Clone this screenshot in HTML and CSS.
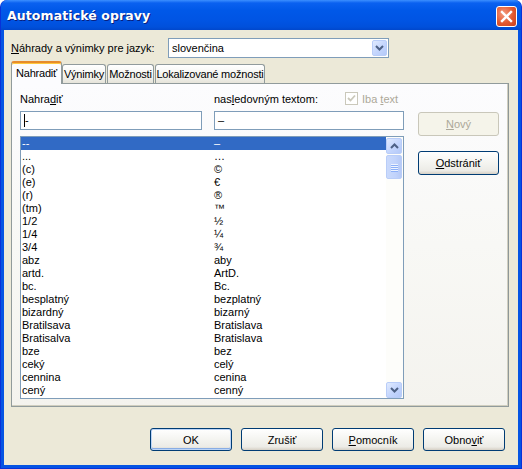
FILE: index.html
```html
<!DOCTYPE html>
<html lang="sk">
<head>
    <meta charset="UTF-8">
    <title>Automatické opravy</title>
    <link rel="stylesheet" href="styles.css">
</head>
<body>
    <div class="window">
        <div class="titlebar">
            <span class="title">Automatické opravy</span>
            <span class="close-btn">
                <svg width="13" height="13" viewBox="0 0 13 13"><path d="M2 2 L11 11 M11 2 L2 11" stroke="#fff" stroke-width="2.4" stroke-linecap="square"/></svg>
            </span>
        </div>

        <div class="client">
            <div class="lang-row">
                <label class="lang-label"><u>N</u>áhrady a výnimky pre jazyk:</label>
                <div class="combo">
                    <span class="combo-value">slovenčina</span>
                    <span class="combo-btn">
                        <svg width="9" height="6" viewBox="0 0 9 6"><path d="M1 1 L4.5 4.5 L8 1" fill="none" stroke="#4D6185" stroke-width="2"/></svg>
                    </span>
                </div>
            </div>

            <div class="tabs">
                <div class="tab active">Nahradiť</div>
                <div class="tab tab-vynimky">Výnimky</div>
                <div class="tab tab-moznosti">Možnosti</div>
                <div class="tab tab-lokal">Lokalizované možnosti</div>
            </div>

            <div class="tab-panel">
                <div class="panel-main">
                    <div class="field-labels">
                        <span class="col-left">Nahra<u>d</u>iť</span>
                        <span class="col-right">nas<u>l</u>edovným textom:</span>
                        <span class="checkbox disabled">
                            <span class="check-box">
                                <svg width="9" height="9" viewBox="0 0 9 9"><path d="M1 4 L3.5 6.5 L8 1.5" fill="none" stroke="#CAC8BB" stroke-width="1.8"/></svg>
                            </span>
                            <span>Iba <u>t</u>ext</span>
                        </span>
                    </div>
                    <div class="fields">
                        <div class="textbox wide-left"><span class="caret"></span>-</div>
                        <div class="textbox wide-right">–</div>
                    </div>
                    <div class="listbox">
                        <div class="list-rows" id="list-rows"></div>
                        <div class="scrollbar">
                            <div class="sb-btn">
                                <svg width="9" height="6" viewBox="0 0 9 6"><path d="M1 5 L4.5 1.5 L8 5" fill="none" stroke="#4D6185" stroke-width="2"/></svg>
                            </div>
                            <div class="sb-thumb">
                                <span class="grip"></span><span class="grip"></span><span class="grip"></span><span class="grip"></span>
                            </div>
                            <div class="sb-track"></div>
                            <div class="sb-btn">
                                <svg width="9" height="6" viewBox="0 0 9 6"><path d="M1 1 L4.5 4.5 L8 1" fill="none" stroke="#4D6185" stroke-width="2"/></svg>
                            </div>
                        </div>
                    </div>
                </div>
                <div class="panel-side">
                    <button class="btn" disabled><u>N</u>ový</button>
                    <button class="btn"><u>O</u>dstrániť</button>
                </div>
            </div>

            <div class="dialog-buttons">
                <button class="btn default">OK</button>
                <button class="btn">Zrušiť</button>
                <button class="btn"><u>P</u>omocník</button>
                <button class="btn">Obno<u>v</u>iť</button>
            </div>
        </div>
    </div>

    <script>
        // Replacement entries: [typed, replaced with]
        const entries = [
            ['--', '–'], ['...', '…'], ['(c)', '©'], ['(e)', '€'], ['(r)', '®'],
            ['(tm)', '™'], ['1/2', '½'], ['1/4', '¼'], ['3/4', '¾'], ['abz', 'aby'],
            ['artd.', 'ArtD.'], ['bc.', 'Bc.'], ['besplatný', 'bezplatný'], ['bizardný', 'bizarný'],
            ['Bratilsava', 'Bratislava'], ['Bratisalva', 'Bratislava'], ['bze', 'bez'],
            ['ceký', 'celý'], ['cennina', 'cenina'], ['cený', 'cenný']
        ];

        document.getElementById('list-rows').innerHTML = entries.map((e, i) => `
            <div class="list-row ${i === 0 ? 'selected' : ''}">
                <span class="cell-from">${e[0]}</span>
                <span class="cell-to">${e[1]}</span>
            </div>
        `).join('');
    </script>
</body>
</html>
```

FILE: styles.css
```css
/* Base */
body {
    margin: 0;
    font-family: 'Liberation Sans', Arial, sans-serif;
    font-size: 11px;
    color: #000;
}

u {
    text-decoration: underline;
    text-underline-offset: 1px;
}

/* Window frame */
.window {
    width: 522px;
    height: 469px;
    background: #0554E3;
    border-radius: 7px 7px 0 0;
    box-sizing: border-box;
    border: 1px solid #0831D9;
    border-top: none;
    display: flex;
    flex-direction: column;
}

.titlebar {
    height: 30px;
    flex-shrink: 0;
    display: flex;
    align-items: center;
    justify-content: space-between;
    padding: 0 4px 0 6px;
    border-radius: 7px 7px 0 0;
    background: linear-gradient(#3C8FFF 0%, #0A61F0 10%, #0058E8 35%, #0054E3 70%, #0050DB 90%, #0047CC 100%);
}

.title {
    color: #fff;
    font-family: 'DejaVu Sans', sans-serif;
    font-weight: bold;
    font-size: 12.5px;
    text-shadow: 1px 1px 0 #0A1F7D;
    letter-spacing: 0.1px;
}

.close-btn {
    width: 19px;
    height: 19px;
    border: 1px solid #fff;
    border-radius: 3px;
    background: radial-gradient(circle at 35% 35%, #F39B7E 0%, #E3582F 55%, #C9401D 100%);
    display: flex;
    align-items: center;
    justify-content: center;
    margin-top: 2px;
}

.client {
    flex: 1;
    margin: 0 3px 3px;
    background: #ECE9D8;
    padding: 8px 9px 0 7px;
    display: flex;
    flex-direction: column;
}

/* Language row */
.lang-row {
    display: flex;
    align-items: center;
    height: 20px;
}

.lang-label {
    width: 157px;
}

.combo {
    width: 219px;
    height: 18px;
    border: 1px solid #7F9DB9;
    background: #fff;
    display: flex;
    align-items: center;
    justify-content: space-between;
}

.combo-value {
    padding-left: 3px;
}

.combo-btn, .sb-btn {
    width: 15px;
    height: 16px;
    margin-right: 1px;
    border: 1px solid #B9CDF8;
    border-radius: 2px;
    box-sizing: border-box;
    background: linear-gradient(135deg, #E0EAFE 0%, #C3D5FD 55%, #B4C9F8 100%);
    display: flex;
    align-items: center;
    justify-content: center;
}

/* Tabs */
.tabs {
    display: flex;
    align-items: flex-end;
    margin-top: 4px;
    height: 21px;
    position: relative;
    z-index: 1;
}

.tab {
    height: 18px;
    line-height: 18px;
    box-sizing: content-box;
    border: 1px solid #919B9C;
    border-bottom: none;
    border-radius: 3px 3px 0 0;
    background: linear-gradient(#FFFFFF, #F3F3EF 60%, #E6E4DA);
    margin-right: 1px;
    text-align: center;
    white-space: nowrap;
    overflow: hidden;
    letter-spacing: -0.2px;
}

.tab-vynimky {
    width: 42px;
}

.tab-moznosti {
    width: 45px;
}

.tab-lokal {
    width: 108px;
}

.tab.active {
    width: 51px;
    height: 23px;
    line-height: 20px;
    box-sizing: border-box;
    background: #FCFCFE;
    border-top: 2px solid #E68B2C;
    box-shadow: inset 0 1px 0 #FFC83C;
    margin-right: 0;
    margin-bottom: -1px;
}

.tab-panel {
    height: 324px;
    box-sizing: border-box;
    border: 1px solid #919B9C;
    border-right-color: #8E9798;
    background: linear-gradient(#FCFCFE 0%, #F8F8F5 50%, #F4F3EE 100%);
    padding: 8px 0 0 8px;
    display: flex;
    box-shadow: inset -1px -1px 0 #D0CEBF;
}

/* Replace panel */
.panel-main {
    width: 384px;
}

.field-labels {
    display: flex;
    align-items: center;
    height: 13px;
}

.col-left {
    width: 194px;
}

.col-right {
    width: 131px;
}

.checkbox {
    display: flex;
    align-items: center;
    gap: 4px;
}

.checkbox.disabled {
    color: #ACA899;
}

.check-box {
    width: 11px;
    height: 11px;
    border: 1px solid #CAC8BB;
    background: #fff;
    display: flex;
    align-items: center;
    justify-content: center;
}

.fields {
    display: flex;
    gap: 12px;
    margin-top: 6px;
}

.textbox {
    height: 17px;
    line-height: 17px;
    border: 1px solid #7F9DB9;
    background: #fff;
    padding-left: 3px;
    display: flex;
    align-items: center;
}

.wide-left {
    width: 177px;
}

.wide-right {
    width: 185px;
}

.caret {
    width: 1px;
    height: 13px;
    background: #000;
}

.listbox {
    margin-top: 6px;
    height: 263px;
    box-sizing: border-box;
    border: 1px solid #7F9DB9;
    background: #fff;
    display: flex;
}

.list-rows {
    flex: 1;
}

.list-row {
    display: flex;
    height: 13px;
    line-height: 13px;
    padding-left: 1px;
}

.list-row.selected {
    background: #316AC5;
    color: #fff;
}

.cell-from {
    width: 192px;
}

/* Scrollbar */
.scrollbar {
    width: 17px;
    background: #FDFDFA;
    display: flex;
    flex-direction: column;
    padding-top: 1px;
    box-sizing: border-box;
}

.scrollbar .sb-btn {
    width: 16px;
    height: 16px;
    margin: 0;
}

.sb-thumb {
    height: 24px;
    margin-top: 1px;
    border: 1px solid #B9CDF8;
    border-radius: 2px;
    box-sizing: border-box;
    width: 16px;
    background: linear-gradient(90deg, #CADAFC, #C1D3FB 60%, #B6CAF7);
    display: flex;
    flex-direction: column;
    align-items: center;
    justify-content: center;
    gap: 1px;
}

.grip {
    width: 7px;
    height: 1px;
    background: #EEF4FE;
    box-shadow: 0 1px 0 #8CB0F8;
}

.sb-track {
    flex: 1;
}

/* Buttons */
.btn {
    width: 82px;
    height: 23px;
    font-family: 'Liberation Sans', Arial, sans-serif;
    font-size: 11px;
    color: #000;
    border: 1px solid #003C74;
    border-radius: 3px;
    background: linear-gradient(#FFFFFF 0%, #F4F4F0 50%, #ECEBE6 85%, #D6D0C5 100%);
    padding: 0;
}

.btn:disabled {
    border-color: #C9C7BA;
    background: #F5F4EA;
    color: #ACA899;
}

.btn.default {
    box-shadow: inset 0 0 0 1px #BCD4F6, inset 0 -1px 0 1px #89ADE4;
}

.panel-side {
    display: flex;
    flex-direction: column;
    gap: 15px;
    margin-left: 14px;
    padding-top: 20px;
}

.panel-side .btn {
    width: 81px;
    height: 24px;
}

.dialog-buttons {
    display: flex;
    justify-content: flex-end;
    gap: 9px;
    margin-top: 21px;
    margin-right: 4px;
}
```
